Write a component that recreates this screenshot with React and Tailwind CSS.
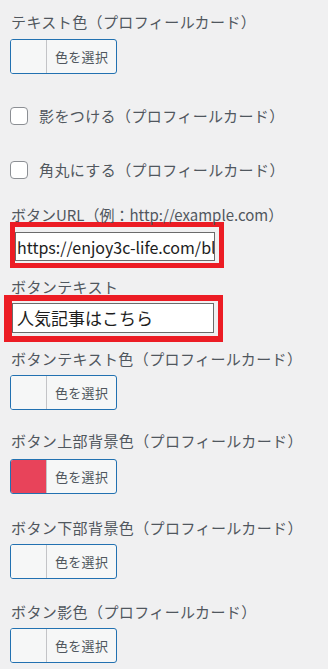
const jp = { fontFamily: '"Noto Sans CJK JP", "Noto Sans", sans-serif' };

function Label({ children, className = "" }) {
  return (
    <div className={`ml-[11px] text-[15px] leading-[16px] text-[#50575e] whitespace-nowrap ${className}`}>
      {children}
    </div>
  );
}

function ColorButton({ color = "#f6f7f7", className = "" }) {
  return (
    <div
      className={`ml-[10px] flex h-[35px] w-[107px] overflow-hidden rounded-[3px] border border-[#2271b1] bg-[#f6f7f7] ${className}`}
    >
      <div className="w-[36px] border-r border-[#c3c4c7]" style={{ backgroundColor: color }} />
      <div className="flex flex-1 items-center pl-[8px] text-[13px] tracking-[0.3px] text-[#50575e]">色を選択</div>
    </div>
  );
}

function Check({ children, className = "" }) {
  return (
    <div className={`ml-[10px] flex h-[18px] items-center gap-[11px] ${className}`}>
      <span className="h-[18px] w-[18px] rounded-[4px] border border-[#8c8f94] bg-white" />
      <span className="text-[15px] leading-[16px] tracking-[0.4px] text-[#50575e]">{children}</span>
    </div>
  );
}

export default function App() {
  return (
    <div className="min-h-[669px] w-[328px] overflow-hidden bg-[#f0f0f1] pb-[5px]" style={jp}>
      <Label className="pt-[14px] tracking-[0.4px]">テキスト色（プロフィールカード）</Label>
      <ColorButton className="mt-[9px]" />

      <Check className="mt-[33px]">影をつける（プロフィールカード）</Check>
      <Check className="mt-[36px]">角丸にする（プロフィールカード）</Check>

      <Label className="mt-[28px]">ボタンURL（例：http://example.com）</Label>
      <div className="ml-[10px] mt-[-1px] w-[214px] border-[5px] border-[#ec1c24] pb-[2px] pr-[4px] pt-[5px]">
        <div className="flex h-[29px] items-center overflow-hidden border border-[#6b6b6b] bg-white pl-[1px] text-[16px] text-[#1d1d1d] whitespace-nowrap">
          https://enjoy3c-life.com/blog
        </div>
      </div>

      <Label className="mt-[11px] tracking-[0.4px]">ボタンテキスト</Label>
      <div className="ml-[4px] mt-0 w-[219px] border-y-[6px] border-l-[8px] border-r-[5px] border-[#ec1c24] pb-[3px] pr-[4px] pt-[2px]">
        <div className="flex h-[30px] items-center overflow-hidden border border-[#6b6b6b] bg-white pl-[4px] text-[17px] text-[#1d1d1d] whitespace-nowrap">
          人気記事はこちら
        </div>
      </div>

      <Label className="mt-[9px] tracking-[0.4px]">ボタンテキスト色（プロフィールカード）</Label>
      <ColorButton className="mt-[8px]" />

      <Label className="mt-[23px] tracking-[0.4px]">ボタン上部背景色（プロフィールカード）</Label>
      <ColorButton className="mt-[10px]" color="#e8435a" />

      <Label className="mt-[26px] tracking-[0.4px]">ボタン下部背景色（プロフィールカード）</Label>
      <ColorButton className="mt-[8px]" />

      <Label className="mt-[25px] tracking-[0.4px]">ボタン影色（プロフィールカード）</Label>
      <ColorButton className="mt-[8px]" />
    </div>
  );
}
